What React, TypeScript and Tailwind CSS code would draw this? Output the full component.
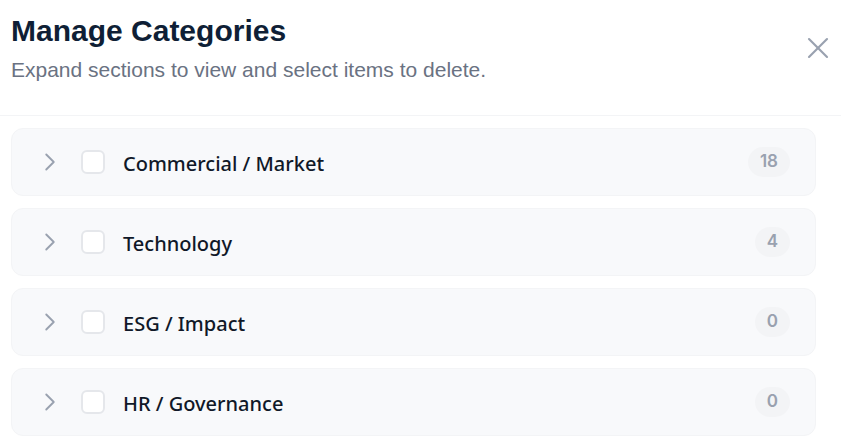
import { ChevronRight, X } from "lucide-react";

const categories = [
  { name: "Commercial / Market", count: 18 },
  { name: "Technology", count: 4 },
  { name: "ESG / Impact", count: 0 },
  { name: "HR / Governance", count: 0 },
];

export default function App() {
  return (
    <div className="w-[841px] h-[439px] overflow-hidden bg-white">
      {/* Header */}
      <div className="relative px-[11px] pt-[13px] h-[116px] border-b border-gray-100">
        <h1 className="text-[30px] leading-[36px] font-bold text-[#0f1f36] font-['Liberation_Sans',Arial,sans-serif]">
          Manage Categories
        </h1>
        <p className="mt-[8px] text-[21px] leading-[26px] text-gray-500 font-['Liberation_Sans',Arial,sans-serif]">
          Expand sections to view and select items to delete.
        </p>
        <button className="absolute right-[5px] top-[30px] text-gray-400">
          <X size={36} strokeWidth={1.4} />
        </button>
      </div>

      {/* Rows */}
      <div className="flex flex-col gap-[12px] pt-[12px] pl-[11px] pr-[25px]">
        {categories.map((c) => (
          <div
            key={c.name}
            className="flex items-center h-[68px] rounded-xl border border-gray-100 bg-[#f8f9fb] pl-[23px] pr-[25px]"
          >
            <ChevronRight size={30} strokeWidth={1.5} className="text-gray-400" />
            <span className="ml-[16px] w-[24px] h-[24px] rounded-md border-2 border-gray-200 bg-white" />
            <span className="ml-[18px] pt-[4px] text-[20px] font-medium text-gray-900 font-['Noto_Sans',sans-serif]">
              {c.name}
            </span>
            <span className="ml-auto min-w-[34px] h-[30px] px-[12px] rounded-full bg-gray-100 flex items-center justify-center text-[17px] font-semibold text-gray-400 font-['Inter',sans-serif]">
              {c.count}
            </span>
          </div>
        ))}
      </div>
    </div>
  );
}
